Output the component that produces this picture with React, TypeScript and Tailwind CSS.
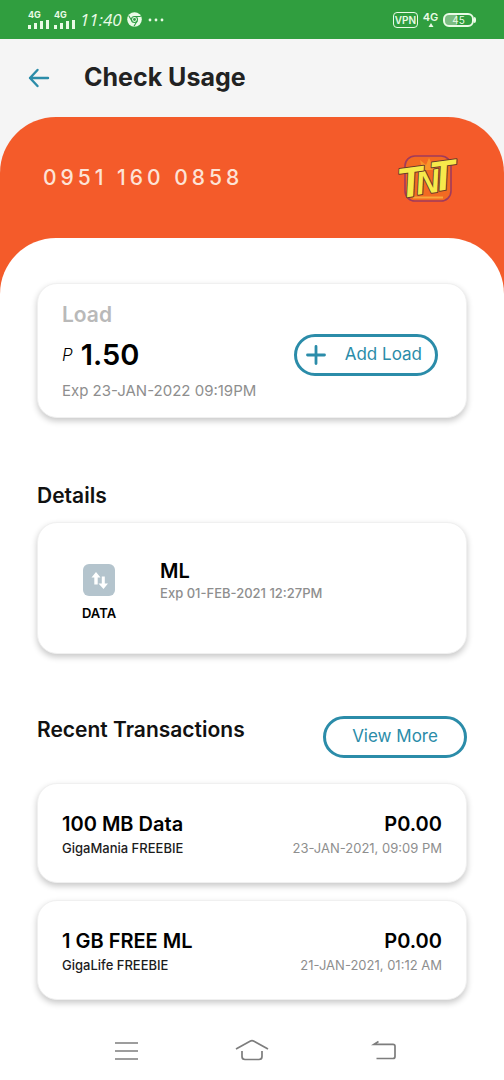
import type { ReactNode } from "react";

interface Transaction {
  title: string;
  promo: string;
  amount: string;
  date: string;
}

const TRANSACTIONS: Transaction[] = [
  {
    title: "100 MB Data",
    promo: "GigaMania FREEBIE",
    amount: "P0.00",
    date: "23-JAN-2021, 09:09 PM",
  },
  {
    title: "1 GB FREE ML",
    promo: "GigaLife FREEBIE",
    amount: "P0.00",
    date: "21-JAN-2021, 01:12 AM",
  },
];

function Signal() {
  return (
    <div className="flex flex-col gap-px">
      <span className="text-[9px] leading-[9px] font-bold">4G</span>
      <svg width="21" height="9" viewBox="0 0 21 9" fill="currentColor">
        <rect x="0" y="5" width="3" height="4" />
        <rect x="6" y="3" width="3" height="6" />
        <rect x="12" y="1" width="3" height="8" />
        <rect x="18" y="0" width="3" height="9" />
      </svg>
    </div>
  );
}

function ChromeIcon() {
  return (
    <svg width="15" height="15" viewBox="0 0 15 15">
      <circle cx="7.5" cy="7.5" r="7.3" fill="#eafbe6" />
      <g fill="none" stroke="#2f9e44" strokeWidth="1.1">
        <circle cx="7.5" cy="7.5" r="3" />
        <path d="M7.5 4.5H13.8M4.9 9L1.8 3.8M10.1 9L7 14.3" />
      </g>
      <circle cx="7.5" cy="7.5" r="1.4" fill="#2f9e44" />
    </svg>
  );
}

function StatusBar() {
  return (
    <div className="flex h-[39px] items-center justify-between bg-[#309e3f] px-7 text-[#eafbe6]">
      <div className="flex items-center gap-[5px]">
        <Signal />
        <Signal />
        <span className="font-['Open_Sans',sans-serif] text-[17px] leading-5 italic">
          11:40
        </span>
        <ChromeIcon />
        <svg width="18" height="4" viewBox="0 0 18 4" fill="currentColor">
          <circle cx="3" cy="2" r="1.4" />
          <circle cx="9" cy="2" r="1.4" />
          <circle cx="15" cy="2" r="1.4" />
        </svg>
      </div>
      <div className="flex items-center gap-1">
        <span className="flex h-4 w-[25px] items-center justify-center rounded-[4px] border border-current text-[10px] leading-3 font-semibold">
          VPN
        </span>
        <div className="flex w-[17px] flex-col items-center">
          <span className="text-[11px] leading-[11px] font-semibold">4G</span>
          <svg width="6" height="4" viewBox="0 0 6 4" fill="currentColor">
            <path d="M3 0L5.5 4H.5Z" />
          </svg>
        </div>
        <div className="flex items-center">
          <span className="flex h-[14px] w-[31px] items-center justify-center rounded-[6px] border-2 border-current bg-linear-to-r from-[#7cbd83] from-45% to-transparent to-45% text-[10px] leading-3">
            45
          </span>
          <span className="h-[6px] w-[2px] rounded-r-sm bg-current" />
        </div>
      </div>
    </div>
  );
}

function TntLogo() {
  return (
    <svg
      width="86"
      height="76"
      viewBox="-12 -12 86 76"
      role="img"
      aria-label="TNT"
    >
      <rect
        x="7"
        y="4"
        width="46"
        height="45"
        rx="10"
        fill="#f26a22"
        stroke="#a03a5c"
        strokeWidth="1.6"
      />
      <path d="M22 8L28 13L31 6L34 12L42 8L38 18H24Z" fill="#f9952a" />
      <path d="M15 45.5H45" stroke="#f9a53a" strokeWidth="2" />
      <g
        fill="#f6e94b"
        stroke="#6b3a2a"
        strokeWidth="2"
        strokeLinejoin="round"
        paintOrder="stroke"
        fontFamily="'Liberation Sans', sans-serif"
        fontWeight="bold"
        fontStyle="italic"
        transform="rotate(-8 31 26)"
      >
        <text x="17" y="41" fontSize="33">
          N
        </text>
        <text x="-1" y="42" fontSize="42">
          T
        </text>
        <text x="32" y="40" fontSize="42">
          T
        </text>
      </g>
    </svg>
  );
}

function Card({ children }: { children: ReactNode }) {
  return (
    <div className="rounded-[20px] border border-[#f0f0f0] bg-white px-6 shadow-[0_3px_6px_rgba(0,0,0,0.22)]">
      {children}
    </div>
  );
}

function LoadCard() {
  return (
    <Card>
      <div className="flex items-center justify-between pt-[17px] pb-4">
        <div>
          <h2 className="text-[21px] leading-7 font-semibold text-[#b9b9b9]">
            Load
          </h2>
          <p className="mt-[6px] flex items-center gap-2 leading-10 text-black">
            <span className="text-[17px] font-light italic">P</span>
            <span className="text-[29px] font-semibold">1.50</span>
          </p>
          <p className="mt-[6px] text-[15px] leading-5 text-[#8e8e8e]">
            Exp 23-JAN-2022 09:19PM
          </p>
        </div>
        <button
          type="button"
          className="mt-2 mr-1 flex h-[42px] w-[144px] items-center justify-between rounded-full border-[3px] border-[#2b8ca9] pr-[13px] pl-[9px] text-[17px] text-[#2b8ca9]"
        >
          <svg
            width="20"
            height="20"
            viewBox="0 0 20 20"
            stroke="currentColor"
            strokeWidth="2.8"
            strokeLinecap="round"
          >
            <path d="M10 1.5V18.5M1.5 10H18.5" />
          </svg>
          Add Load
        </button>
      </div>
    </Card>
  );
}

function DetailsCard() {
  return (
    <Card>
      <div className="flex gap-11 pt-[34px] pb-[30px] pl-5">
        <div className="flex flex-col items-center gap-[7px] pt-[7px]">
          <svg width="32" height="32" viewBox="0 0 32 32">
            <rect width="32" height="32" rx="6" fill="#b4c4cd" />
            <g fill="#fff">
              <path d="M13 8L17.5 13.5H14.7V20.5H11.3V13.5H8.5Z" />
              <path d="M20.5 25L15.5 19.5H18.8V12.5H21.8V19.5H25Z" />
            </g>
          </svg>
          <span className="text-[13px] leading-5 font-semibold text-black">
            DATA
          </span>
        </div>
        <div>
          <h3 className="text-xl leading-7 font-semibold text-black">ML</h3>
          <p className="text-[13px] leading-4 font-medium text-[#8e8e8e]">
            Exp 01-FEB-2021 12:27PM
          </p>
        </div>
      </div>
    </Card>
  );
}

function TransactionCard({ tx }: { tx: Transaction }) {
  return (
    <Card>
      <div className="flex justify-between pt-[26px] pb-6">
        <div>
          <h3 className="text-xl leading-7 font-semibold text-black">
            {tx.title}
          </h3>
          <p className="text-[13px] leading-5 font-medium text-[#1c1c1c]">
            {tx.promo}
          </p>
        </div>
        <div className="text-right">
          <p className="text-xl leading-7 font-semibold text-black">
            {tx.amount}
          </p>
          <p className="text-[13px] leading-5 text-[#8e8e8e]">{tx.date}</p>
        </div>
      </div>
    </Card>
  );
}

function NavBar() {
  return (
    <nav className="flex items-center justify-between px-[108px] pt-[39px] pb-[17px] text-[#7d7d7d]">
      <button type="button" aria-label="Recent apps">
        <svg
          width="36"
          height="24"
          viewBox="0 0 36 24"
          fill="none"
          stroke="currentColor"
          strokeWidth="1.7"
        >
          <path d="M7 4H30M7 12H30M7 20H30" />
        </svg>
      </button>
      <button type="button" aria-label="Home">
        <svg
          width="36"
          height="24"
          viewBox="0 0 36 24"
          fill="none"
          stroke="currentColor"
          strokeWidth="1.7"
        >
          <path d="M2 10L16 2.2Q18 1.2 20 2.2L34 10" />
          <path d="M8 12V17.5Q8 20.5 11 20.5H25Q28 20.5 28 17.5V12" />
        </svg>
      </button>
      <button type="button" aria-label="Back">
        <svg
          width="36"
          height="24"
          viewBox="0 0 36 24"
          fill="none"
          stroke="currentColor"
          strokeWidth="1.7"
        >
          <path d="M18.5 2.5L14 5.3H33Q35 5.3 35 7.3V17.5Q35 19.5 33 19.5H16.5" />
        </svg>
      </button>
    </nav>
  );
}

export default function App() {
  return (
    <div className="min-h-screen bg-[#f5f5f5] font-['Inter',sans-serif]">
      <StatusBar />

      <header className="flex h-[78px] items-center gap-[34px] px-7">
        <a href="#" aria-label="Back" className="text-[#2b8ca9]">
          <svg
            width="22"
            height="20"
            viewBox="0 0 22 20"
            fill="none"
            stroke="currentColor"
            strokeWidth="2.4"
            strokeLinecap="round"
            strokeLinejoin="round"
          >
            <path d="M9.5 2L2 10L9.5 18M2 10H20" />
          </svg>
        </a>
        <h1 className="text-[25px] font-bold text-[#222]">Check Usage</h1>
      </header>

      <main className="rounded-t-[56px] bg-[#f45b2a]">
        <div className="flex h-[121px] items-center justify-between pr-8 pl-[43px]">
          <p className="text-[21px] font-medium tracking-[4px] text-[#fde3d6]">
            0951 160 0858
          </p>
          <TntLogo />
        </div>

        <div className="rounded-t-[56px] bg-white">
          <div className="px-[37px] pt-[45px]">
            <LoadCard />

            <h2 className="mt-16 mb-3 text-[21px] leading-7 font-semibold text-[#111]">
              Details
            </h2>
            <DetailsCard />

            <div className="mt-[62px] flex items-start justify-between">
              <h2 className="text-[21px] leading-7 font-semibold text-[#111]">
                Recent Transactions
              </h2>
              <button
                type="button"
                className="h-[42px] w-[144px] rounded-full border-[3px] border-[#2b8ca9] text-[17px] text-[#2b8ca9]"
              >
                View More
              </button>
            </div>
            <div className="mt-[25px] flex flex-col gap-[17px]">
              {TRANSACTIONS.map((tx) => (
                <TransactionCard key={tx.title} tx={tx} />
              ))}
            </div>
          </div>
          <NavBar />
        </div>
      </main>
    </div>
  );
}
